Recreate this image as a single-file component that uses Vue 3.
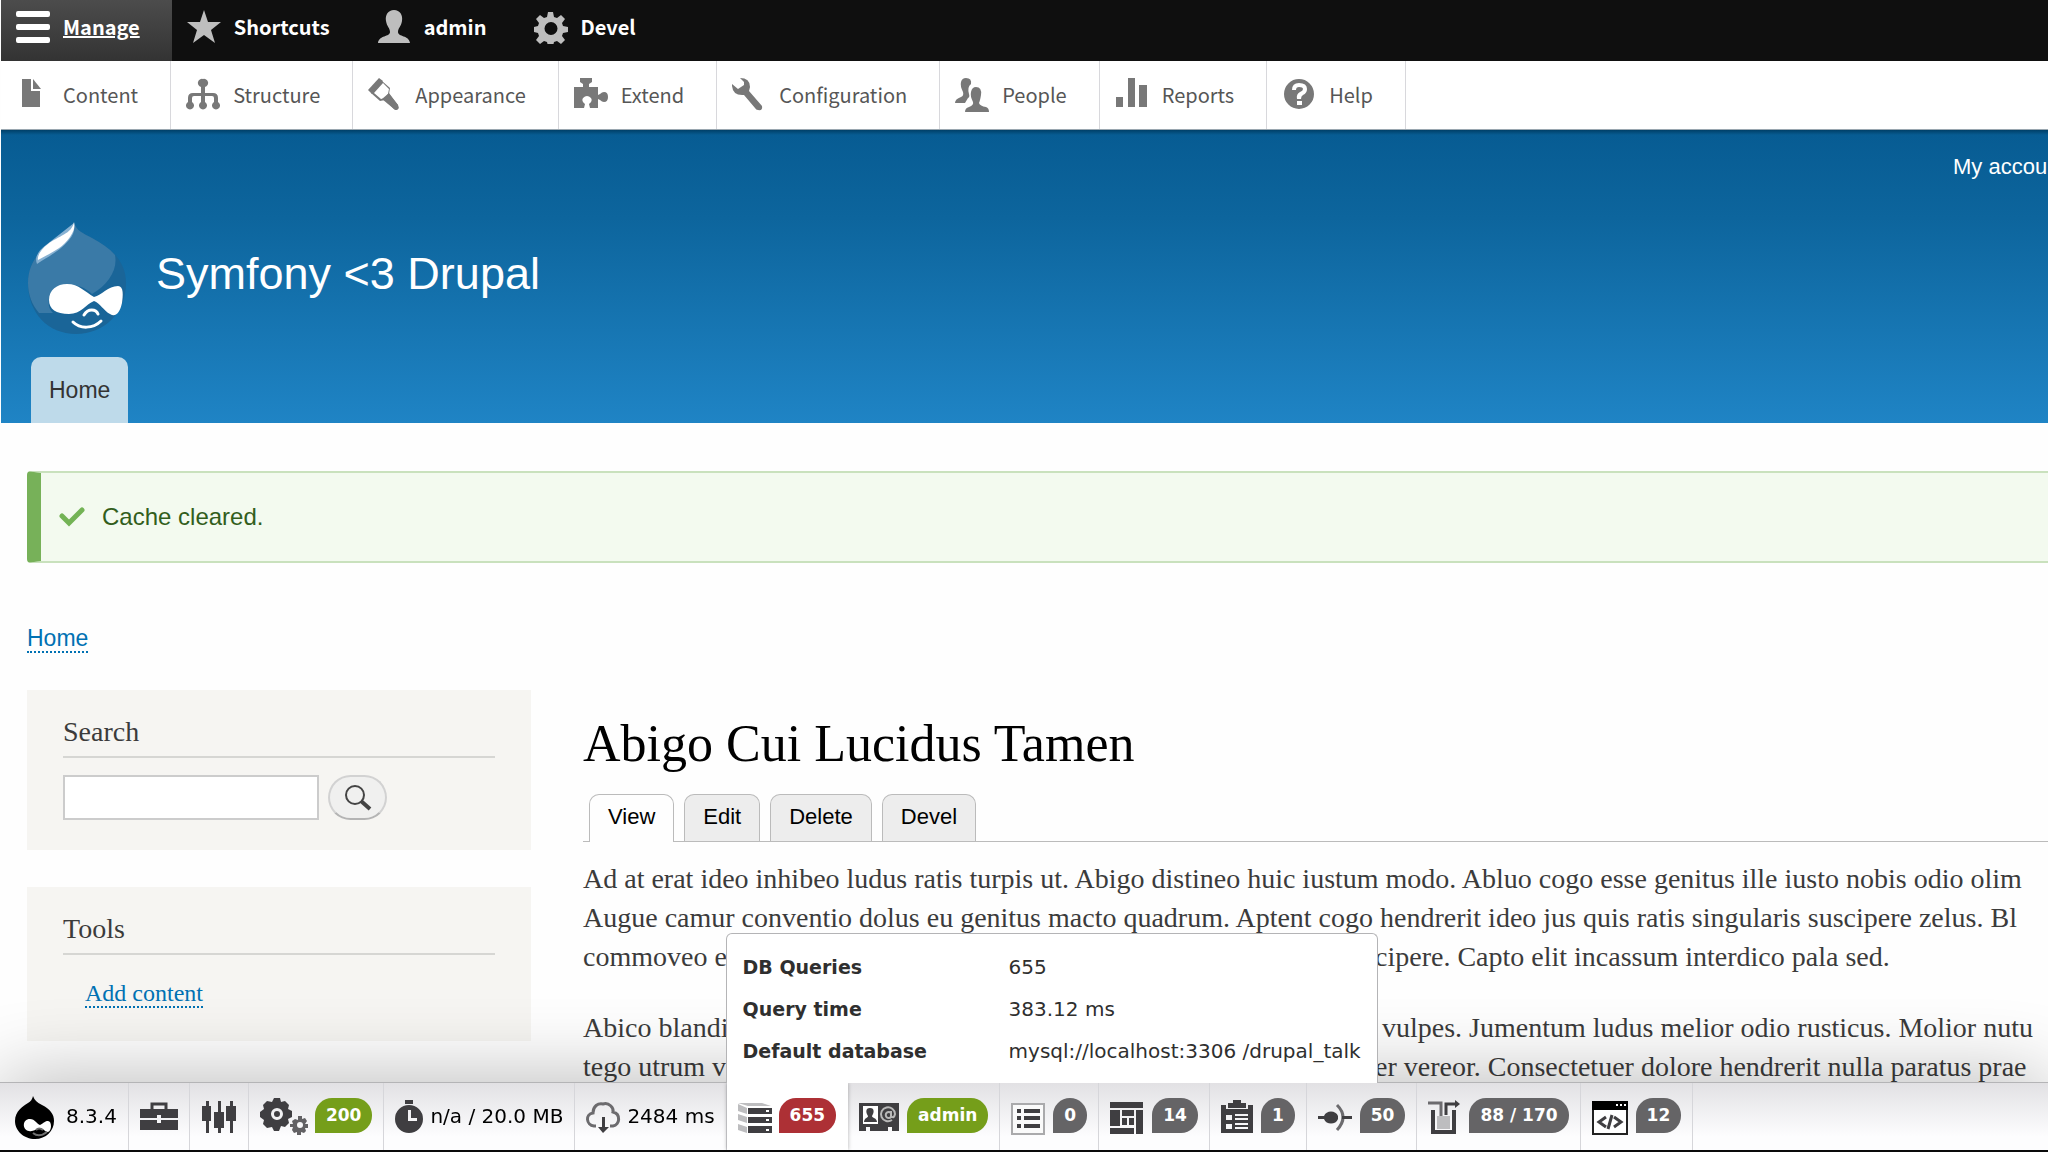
<template>
  <div class="page">
    <nav class="admin-bar" aria-label="Administration toolbar">
      <a
        v-for="item in adminItems"
        :key="item.label"
        href="#"
        class="admin-item"
        :class="{ 'is-active': item.active }"
      >
        <svg class="icon" viewBox="0 0 34 34" aria-hidden="true">
          <path v-for="d in item.paths" :key="d" :d="d" fill-rule="evenodd" />
        </svg>
        <span>{{ item.label }}</span>
      </a>
    </nav>

    <nav class="admin-tray" aria-label="Administration menu">
      <a v-for="item in trayItems" :key="item.label" href="#" class="tray-item">
        <svg class="icon" viewBox="0 0 34 34" aria-hidden="true">
          <path v-for="d in item.paths" :key="d" :d="d" fill-rule="evenodd" />
        </svg>
        <span>{{ item.label }}</span>
      </a>
    </nav>

    <header class="site-header">
      <nav class="account-menu" aria-label="User account menu">
        <a href="#">My account</a>
      </nav>
      <div class="branding">
        <svg class="logo" viewBox="0 0 100 114" aria-hidden="true">
          <path class="logo-dark" d="M47 1c2 9 9 11 18 16 18 10 34 22 34 45 0 30-22 51-50 51S1 92 1 62c0-22 14-34 27-43 9-6 18-9 19-18z" />
          <path class="logo-light" d="M47 1c2 9 9 11 18 16 9 5 17 10 23 17 3 15-7 30-23 39-14-14-40-12-43 5-1 6 0 10 4 14H12C5 84 1 73 1 62c0-22 14-34 27-43 9-6 18-9 19-18z" />
          <path class="logo-shade" d="M47 2c1 6 0 11-5 17-9 11-20 16-32 24-3-7 2-14 9-19z" />
          <path class="logo-white" d="M47 1c1 6 0 9-4 15-8 12-20 16-32 23-1-4 3-11 10-16 10-8 24-10 26-22z" />
          <path class="logo-white" d="M40 63c12 0 18 8 27 13 8-2 14-11 24-11 6 0 5 10 4 17-2 9-6 15-12 11-6-3-10-11-16-13-8 3-13 13-25 13-13 0-20-5-20-14 0-10 8-16 18-16z" />
          <path class="logo-line" d="M57 94c4-7 12-6 14-1M46 101c7 7 20 7 28-1" />
        </svg>
        <a href="#" class="site-name">Symfony &lt;3 Drupal</a>
      </div>
      <nav class="main-menu" aria-label="Main navigation">
        <a href="#">Home</a>
      </nav>
    </header>

    <div class="message" role="status">
      <svg viewBox="0 0 26 20" aria-hidden="true">
        <path d="M3 9l7 7L23 3" />
      </svg>
      <span>Cache cleared.</span>
    </div>

    <nav class="breadcrumb" aria-label="Breadcrumb">
      <a href="#">Home</a>
    </nav>

    <div class="columns">
      <aside class="sidebar">
        <section class="block">
          <h2>Search</h2>
          <form class="search-form" @submit.prevent>
            <input v-model="keywords" type="search" aria-label="Search">
            <button type="submit" aria-label="Search">
              <svg viewBox="0 0 28 26" aria-hidden="true">
                <circle cx="11" cy="10" r="9" />
                <path d="M17 16l9 8" />
              </svg>
            </button>
          </form>
        </section>
        <section class="block">
          <h2>Tools</h2>
          <ul class="tools">
            <li><a href="#">Add content</a></li>
          </ul>
        </section>
      </aside>

      <main class="content">
        <h1>Abigo Cui Lucidus Tamen</h1>
        <nav class="tabs" aria-label="Tabs">
          <a
            v-for="tab in tabs"
            :key="tab"
            href="#"
            class="tab"
            :class="{ 'is-active': tab === activeTab }"
            @click.prevent="activeTab = tab"
          >{{ tab }}</a>
        </nav>
        <p v-for="(lines, index) in paragraphs" :key="index">
          <span v-for="line in lines" :key="line[0]" class="line">
            <span v-for="part in line" :key="part" class="part">{{ part }}</span>
          </span>
        </p>
      </main>
    </div>

    <footer class="profiler">
      <div
        v-for="item in profilerItems"
        :key="item.name"
        class="profiler-item"
        :class="{ 'is-open': item.details }"
      >
        <svg
          class="profiler-icon"
          :width="item.width"
          height="40"
          :viewBox="`0 0 ${item.width} 40`"
          role="img"
          :aria-label="item.name"
        >
          <path
            v-for="shape in item.shapes"
            :key="shape.d"
            :d="shape.d"
            :class="shape.tone"
            fill-rule="evenodd"
          />
        </svg>
        <span v-if="item.text" class="profiler-text">{{ item.text }}</span>
        <span v-if="item.badge" class="badge" :class="item.color">{{ item.badge }}</span>
        <div v-if="item.details" class="details">
          <table>
            <tbody>
              <tr v-for="row in item.details" :key="row[0]">
                <th scope="row">{{ row[0] }}</th>
                <td>{{ row[1] }}</td>
              </tr>
            </tbody>
          </table>
        </div>
      </div>
    </footer>
  </div>
</template>

<script setup>
import { ref } from "vue";

const keywords = ref("");
const activeTab = ref("View");
const tabs = ["View", "Edit", "Delete", "Devel"];

const adminItems = [
  {
    label: "Manage",
    active: true,
    paths: ["M2 1h30q2 0 2 2v2q0 2-2 2H2q-2 0-2-2V3q0-2 2-2zM2 14h30q2 0 2 2v2q0 2-2 2H2q-2 0-2-2v-2q0-2 2-2zM2 27h30q2 0 2 2v2q0 2-2 2H2q-2 0-2-2v-2q0-2 2-2z"],
  },
  {
    label: "Shortcuts",
    paths: ["M17 0l4 12h13l-10 8 4 13-11-8-11 8 4-13L0 12h13z"],
  },
  {
    label: "admin",
    paths: ["M17 0c6 0 9 5 8 11-1 6-4 7-4 11 0 5 11 3 12 11H1c1-8 12-6 12-11 0-4-3-5-4-11C8 5 11 0 17 0z"],
  },
  {
    label: "Devel",
    paths: ["M14 2h5l1 5 3 1 4-3 4 4-3 4 1 3 5 1v5l-5 1-1 3 3 4-4 4-4-3-3 1-1 4h-5l-1-4-3-1-4 3-4-4 3-4-1-3-4-1v-5l4-1 1-3-3-4 4-4 4 3 3-1zM17 12a6 6 0 1 0 0 13a6 6 0 0 0 0-13z"],
  },
];

const trayItems = [
  {
    label: "Content",
    paths: ["M6 1h9v12h9v16H6z", "M17 1l8 10h-8z"],
  },
  {
    label: "Structure",
    paths: [
      "M17 1a4 4 0 0 1 2 8v6h8q5 0 5 5v4a4 4 0 1 1-4 0v-4q0-2-2-2h-7v6a4 4 0 1 1-4 0v-6H8q-2 0-2 2v4a4 4 0 1 1-4 0v-4q0-5 5-5h8V9a4 4 0 0 1 2-8z",
    ],
  },
  {
    label: "Appearance",
    paths: [
      "M0 12L11 0l4 3L4 16z",
      "M3 15L14 3l8 7-1 6 9 11q1 3 0 4-2 2-4 0L17 22l-5 1zM6 15l7 6 4-1 3-4 1-5-6-6z",
      "M14 21l7-6 9 12q1 3 0 4-2 2-4 0z",
    ],
  },
  {
    label: "Extend",
    paths: [
      "M0 9h9V6L6 4V0h12v4l-3 2v3h9v8l2-1q2-2 4-2 4 0 4 5t-4 5q-2 0-4-2l-2-1v9h-8l-1-4q4-3 2-6-2-2-4-2t-4 2q-2 3 2 6l-1 4H0z",
    ],
  },
  {
    label: "Configuration",
    paths: [
      "M8 0q10 0 10 9l-1 4 13 15q1 5-4 4-2 0-3-2L12 17Q1 18 0 8V6l6 5 6-4V4z",
    ],
  },
  {
    label: "People",
    paths: [
      "M11 0q6 0 5 6-4 3-2 10 1 3-1 4l-3 5H0q0-4 6-6 3-1 2-5-3-6-2-10 1-4 5-4z",
      "M21 9q6 0 5 8-1 6-2 8 1 3 7 4 3 1 3 5H10q0-4 4-5 5-2 4-5-3-6-2-10 1-5 5-5z",
    ],
  },
  {
    label: "Reports",
    paths: ["M1 19h7v10H1zM13 0h7v29h-7zM24 7h8v22h-8z"],
  },
  {
    label: "Help",
    paths: [
      "M17 1a15 15 0 1 0 0 30a15 15 0 0 0 0-30zM10 12q0-7 7-7 8 0 8 6 0 4-4 6-2 1-2 4h-4q-1-5 3-7 3-1 3-3t-4-2q-3 0-3 3zM15 23h5v4h-5z",
    ],
  },
];

// lines that run behind the open profiler panel are split in two parts
const paragraphs = [
  [
    ["Ad at erat ideo inhibeo ludus ratis turpis ut. Abigo distineo huic iustum modo. Abluo cogo esse genitus ille iusto nobis odio olim"],
    ["Augue camur conventio dolus eu genitus macto quadrum. Aptent cogo hendrerit ideo jus quis ratis singularis suscipere zelus. Bl"],
    ["commoveo e", "cipere. Capto elit incassum interdico pala sed."],
  ],
  [
    ["Abico blandi", "\u00a0vulpes. Jumentum ludus melior odio rusticus. Molior nutu"],
    ["tego utrum v", "er vereor. Consectetuer dolore hendrerit nulla paratus prae"],
  ],
];

const profilerItems = [
  {
    name: "Drupal",
    width: 39,
    text: "8.3.4",
    shapes: [
      { d: "M18 0q2 6 9 9c8 4 12 9 12 16 0 10-8 18-19 18S0 35 0 25C0 15 8 10 13 7q4-2 5-7z", tone: "black" },
      { d: "M15 23c5 0 7 5 10 6 4-2 5-4 8-4 4 0 4 10 0 11-3 0-5-4-8-4-4 1-7 4-11 3-7-1-7-12 1-12z", tone: "white" },
      { d: "M18 37q6 5 14-1M21 34q3-3 7 0", tone: "gray-line" },
    ],
  },
  {
    name: "Toolbox",
    width: 38,
    shapes: [
      { d: "M12 13V8h14v5", tone: "dark-line" },
      { d: "M0 13h38v9H21v-3h-4v3H0zM0 24h17v3h4v-3h17v10H0z", tone: "dark" },
    ],
  },
  {
    name: "Settings",
    width: 36,
    shapes: [
      { d: "M5 5h3v5h2v15H8v12H5V25H1V10h4zM17 5h3v11h3v16h-3v5h-3v-5h-4V16h4zM29 5h3v5h3v15h-3v12h-3V25h-4V10h4z", tone: "dark" },
    ],
  },
  {
    name: "Request",
    width: 47,
    badge: "200",
    color: "green",
    shapes: [
      { d: "M14 2h6l1 4 4-1 4 4-1 4 4 2v6l-4 2 1 4-4 4-4-1-2 5h-5l-2-4-5 1-4-4 1-4-4-3v-5l4-3-1-4 4-4 5 1zM17 12a6 6 0 1 0 0 12a6 6 0 0 0 0-12zM17 15a3 3 0 1 1 0 6a3 3 0 0 1 0-6z", tone: "dark" },
      { d: "M38 20h4v3l3-1 2 3-2 3h3v4h-3l1 3-2 2-3-1v3h-4v-3l-3 1-2-3 1-3h-3v-3h3l-1-3 3-2 3 1zM40 26a3 3 0 1 0 0 6a3 3 0 0 0 0-6z", tone: "mid" },
    ],
  },
  {
    name: "Performance",
    width: 27,
    text: "n/a / 20.0 MB",
    shapes: [
      { d: "M10 4h8v4h-8zM14 9a14 14 0 1 0 0 28a14 14 0 0 0 0-28zM13 14h3v8h6v3h-9z", tone: "dark" },
    ],
  },
  {
    name: "Time",
    width: 33,
    text: "2484 ms",
    shapes: [
      { d: "M10 30H8c-8-1-9-12-1-13 0-7 5-10 10-9 6-2 11 4 10 8 8 2 7 13 0 14h-3", tone: "mid-line" },
      { d: "M16 21h3v10h4l-6 6-5-6h4z", tone: "dark" },
    ],
  },
  {
    name: "Database",
    width: 33,
    badge: "655",
    color: "red",
    details: [
      ["DB Queries", "655"],
      ["Query time", "383.12 ms"],
      ["Default database", "mysql://localhost:3306 /drupal_talk"],
    ],
    shapes: [
      { d: "M0 7h24l9 3H10zM0 8l9 4v6l-9-3zM0 18l9 3v6l-9-3zM0 28l9 3v6l-9-3z", tone: "light" },
      { d: "M10 12h24v6H10zM10 21h24v6H10zM10 30h24v7H10z", tone: "dark" },
      { d: "M28 14h3v2h-3zM28 23h3v2h-3zM28 33h3v2h-3z", tone: "white" },
    ],
  },
  {
    name: "User",
    width: 40,
    badge: "admin",
    color: "green",
    shapes: [
      { d: "M0 7h40v28h-7v-4h-4v4H11v-4H7v4H0z", tone: "dark" },
      { d: "M4 10h15v18H4z", tone: "white" },
      { d: "M11 12c5 0 4 5 2 8 0 2 5 2 5 6H5c0-4 4-4 4-6-2-3-3-8 2-8z", tone: "dark" },
      { d: "M32 17a3 3 0 1 0 0 4M32 15v5q3 3 4-2a7 7 0 1 0-3 6", tone: "light-line" },
    ],
  },
  {
    name: "Views",
    width: 34,
    badge: "0",
    color: "gray",
    shapes: [
      { d: "M1 8h32v30H1z", tone: "outline" },
      { d: "M6 13h4v4H6zM13 13h16v4H13zM6 20h4v4H6zM13 20h16v4H13zM6 28h4v4H6zM13 28h16v4H13z", tone: "dark" },
    ],
  },
  {
    name: "Blocks",
    width: 34,
    badge: "14",
    color: "gray",
    shapes: [
      { d: "M0 6h33v6H0zM0 14h10v16H0zM12 14h12v6H12zM26 14h7v24h-7zM12 22h5v7h-5zM19 22h5v7h-5zM0 32h24v6H0z", tone: "dark" },
    ],
  },
  {
    name: "Forms",
    width: 32,
    badge: "1",
    color: "gray",
    shapes: [
      { d: "M0 9h5v4h22V9h5v28H0zM7 7h5V4h8v3h5v5H7zM5 19h6v5H5zM14 18h13v2H14zM14 22h13v2H14zM5 28h6v5H5zM14 27h13v2H14zM14 31h13v2H14z", tone: "dark" },
    ],
  },
  {
    name: "Events",
    width: 34,
    badge: "50",
    color: "gray",
    shapes: [
      { d: "M0 20h6c2-6 12-6 14 0v3c-2 6-12 6-14 0H0z", tone: "dark" },
      { d: "M19 9q12 12 0 25", tone: "mid-line" },
      { d: "M24 20h10v3H24z", tone: "dark" },
    ],
  },
  {
    name: "Cache",
    width: 33,
    badge: "88 / 170",
    color: "gray",
    shapes: [
      { d: "M5 14v22h21V14", tone: "dark-thick" },
      { d: "M9 20h13v13H9z", tone: "light" },
      { d: "M0 7h13v13", tone: "mid-line" },
      { d: "M18 19V8h10", tone: "dark-line" },
      { d: "M27 4l5 4-5 4z", tone: "dark" },
    ],
  },
  {
    name: "Assets",
    width: 36,
    badge: "12",
    color: "gray",
    shapes: [
      { d: "M1 6h34v32H1z", tone: "window" },
      { d: "M0 5h36v9H0z", tone: "black" },
      { d: "M24 8h2v2h-2zM28 8h2v2h-2zM32 8h2v2h-2z", tone: "white" },
      { d: "M14 21l-7 5 7 5M22 21l7 5-7 5M20 19l-4 14", tone: "code-line" },
    ],
  },
];
</script>

<style>
body {
  background: #ffffff;
}
</style>

<style scoped>
.page {
  box-sizing: border-box;
  min-height: 100vh;
  padding-left: 1px;
  overflow: hidden;
  background: #fefefe;
  color: #3b3b3b;
  font-family: "Liberation Sans", Arial, sans-serif;
  font-size: 22px;
  line-height: 32px;
}

a {
  color: inherit;
  text-decoration: none;
}

.admin-bar,
.admin-tray {
  display: flex;
  font-family: "Noto Sans CJK SC", "Noto Sans", sans-serif;
  font-size: 20px;
}

.admin-bar {
  height: 61px;
  background: #0f0f0f;
  color: #ffffff;
  font-weight: 700;
}

.admin-item,
.tray-item {
  display: flex;
  align-items: center;
  gap: 13px;
  padding: 0 32px 0 15px;
}

.admin-item {
  padding-bottom: 7px;
}

.icon {
  width: 34px;
  height: 34px;
  fill: #bebebe;
}

.admin-item.is-active {
  background: linear-gradient(#4c4c4c, #333333);
}

.admin-item.is-active span {
  text-decoration: underline;
}

.admin-item.is-active .icon {
  fill: #ffffff;
}

.admin-tray {
  height: 68px;
  background: #ffffff;
  border-bottom: 1px solid #9aa7b0;
  color: #565656;
}

.tray-item {
  border-right: 1px solid #d8d8dc;
}

.tray-item .icon {
  fill: #787878;
}

.site-header {
  padding-top: 21px;
  background: linear-gradient(#004068 0, #075c93 5px, #0d659d 30%, #1f84c5 100%);
}

.account-menu {
  display: flex;
  justify-content: flex-end;
  color: #ffffff;
}

.account-menu a {
  width: 95px;
  white-space: nowrap;
}

.branding {
  display: flex;
  align-items: center;
  gap: 29px;
  margin-top: 38px;
  padding-left: 26px;
}

.logo {
  width: 100px;
  height: 114px;
}

.logo-dark {
  fill: #1a6598;
}

.logo-light {
  fill: #3a7aa7;
}

.logo-shade {
  fill: #87b1d2;
}

.logo-white {
  fill: #ffffff;
}

.logo-line {
  fill: none;
  stroke: #ffffff;
  stroke-width: 3;
  stroke-linecap: round;
}

.site-name {
  padding-bottom: 8px;
  color: #ffffff;
  font-size: 45px;
  line-height: 50px;
}

.main-menu {
  display: flex;
  margin-top: 22px;
  padding-left: 30px;
  font-size: 23px;
}

.main-menu a {
  padding: 17px 18px;
  border-radius: 10px 10px 0 0;
  background: #bedaea;
  color: #333333;
}

.message {
  display: flex;
  align-items: center;
  gap: 17px;
  margin: 48px 0 0 26px;
  padding: 28px 18px;
  border: 2px solid #c9e1bd;
  border-left: 14px solid #77b159;
  border-right: 0;
  border-radius: 4px 0 0 4px;
  background: #f3faef;
  color: #325e1c;
  font-size: 24px;
}

.message svg {
  width: 26px;
  height: 20px;
  fill: none;
  stroke: #73b355;
  stroke-width: 5;
  stroke-linecap: round;
}

.breadcrumb {
  margin: 59px 0 36px 26px;
  font-size: 23px;
}

.breadcrumb a,
.tools a {
  border-bottom: 2px dotted #0071b3;
  color: #0071b3;
}

.columns {
  display: grid;
  grid-template-columns: 504px minmax(0, 1fr);
  gap: 52px;
  padding-left: 26px;
  font-family: "Liberation Serif", "Times New Roman", serif;
}

.sidebar {
  display: flex;
  flex-direction: column;
  align-items: stretch;
  gap: 37px;
}

.block {
  padding: 24px 36px 30px;
  background: #f6f5f2;
}

.block h2 {
  margin: 0;
  padding-bottom: 6px;
  border-bottom: 2px solid #d6d6d3;
  font-size: 28px;
  font-weight: 400;
  line-height: 36px;
}

.search-form {
  display: flex;
  gap: 9px;
  margin-top: 17px;
}

.search-form input {
  box-sizing: border-box;
  width: 256px;
  height: 45px;
  padding: 4px 8px;
  border: 2px solid #cccccc;
  background: #ffffff;
  font-size: 22px;
}

.search-form button {
  display: flex;
  align-items: center;
  justify-content: center;
  width: 59px;
  height: 45px;
  padding: 0;
  border: 2px solid #d2d2d2;
  border-bottom-color: #b4b4b4;
  border-radius: 23px;
  background: #f0f0ef;
}

.search-form svg {
  width: 28px;
  height: 26px;
  fill: none;
  stroke: #444444;
  stroke-width: 2;
}

.search-form svg path {
  stroke-width: 4;
}

.tools {
  margin: 20px 0 0;
  padding-left: 22px;
  list-style: none;
  font-size: 24px;
  line-height: 36px;
}

.content h1 {
  margin: 24px 0 20px;
  color: #000000;
  font-size: 52px;
  font-weight: 400;
  line-height: 60px;
}

.tabs {
  display: flex;
  gap: 10px;
  padding-left: 6px;
  border-bottom: 1px solid #bbbbbb;
  font-family: "Liberation Sans", Arial, sans-serif;
}

.tab {
  padding: 6px 18px 8px;
  border: 1px solid #bbbbbb;
  border-bottom: 0;
  border-radius: 10px 10px 0 0;
  background: #ededed;
  color: #000000;
}

.tab.is-active {
  margin-bottom: -1px;
  background: #fefefe;
}

.content p {
  margin: 17px 0 32px;
  font-size: 28px;
  line-height: 39px;
}

.content p + p {
  margin-top: 0;
}

.line {
  display: flex;
  white-space: nowrap;
}

.part:not(:last-child) {
  flex: 0 0 792px;
}

.profiler {
  position: fixed;
  right: 0;
  bottom: 0;
  left: 0;
  display: flex;
  height: 67px;
  padding-left: 1px;
  border-top: 1px solid #b4b4b6;
  border-bottom: 2px solid #0a0a0a;
  background: linear-gradient(#e2e1e4, #fdfdfe 80%);
  box-shadow: 0 0 80px rgba(0, 0, 0, 0.3);
  color: #000000;
  font-family: "DejaVu Sans", Verdana, sans-serif;
  font-size: 20px;
}

.profiler-item {
  position: relative;
  display: flex;
  align-items: center;
  gap: 8px;
  padding: 0 11px 2px;
  border-right: 1px solid #d6d6da;
  white-space: nowrap;
}

.profiler-item:first-child {
  gap: 12px;
  padding-left: 14px;
}

.profiler-item.is-open {
  border-right-color: #ffffff;
  background: #ffffff;
  box-shadow: 0 0 4px rgba(0, 0, 0, 0.3);
}

.profiler-icon {
  overflow: visible;
}

.black {
  fill: #000000;
}

.white {
  fill: #ffffff;
}

.dark {
  fill: #3f3e41;
}

.mid {
  fill: #626164;
}

.light {
  fill: #bdbdbf;
}

.dark-line,
.dark-thick,
.mid-line,
.gray-line,
.light-line,
.code-line {
  fill: none;
  stroke: #3f3e41;
  stroke-width: 3;
}

.dark-thick {
  stroke-width: 4;
}

.mid-line {
  stroke: #6c6b6e;
}

.gray-line {
  stroke: #707070;
  stroke-width: 2;
}

.light-line {
  stroke: #b8b8b8;
  stroke-width: 2;
}

.outline {
  fill: #fafafa;
  stroke: #aaaaac;
  stroke-width: 2;
}

.window {
  fill: #ffffff;
  stroke: #222222;
  stroke-width: 2;
}

.badge {
  padding: 0 11px;
  border-radius: 17px 17px 17px 0;
  color: #ffffff;
  font-size: 17px;
  font-weight: 700;
  line-height: 35px;
}

.green {
  background: #759e1a;
}

.red {
  background: #ad3035;
}

.gray {
  background: #656466;
}

.details {
  position: absolute;
  bottom: 100%;
  left: -1px;
  padding: 12px 16px 11px;
  border: 1px solid #b4b4b6;
  border-bottom: 0;
  border-radius: 6px 6px 0 0;
  background: #ffffff;
}

.details table {
  border-collapse: collapse;
  color: #2f2f2f;
  line-height: 42px;
}

.details th,
.details td {
  padding: 0;
  text-align: left;
}

.details th {
  min-width: 266px;
  font-size: 19px;
}
</style>
